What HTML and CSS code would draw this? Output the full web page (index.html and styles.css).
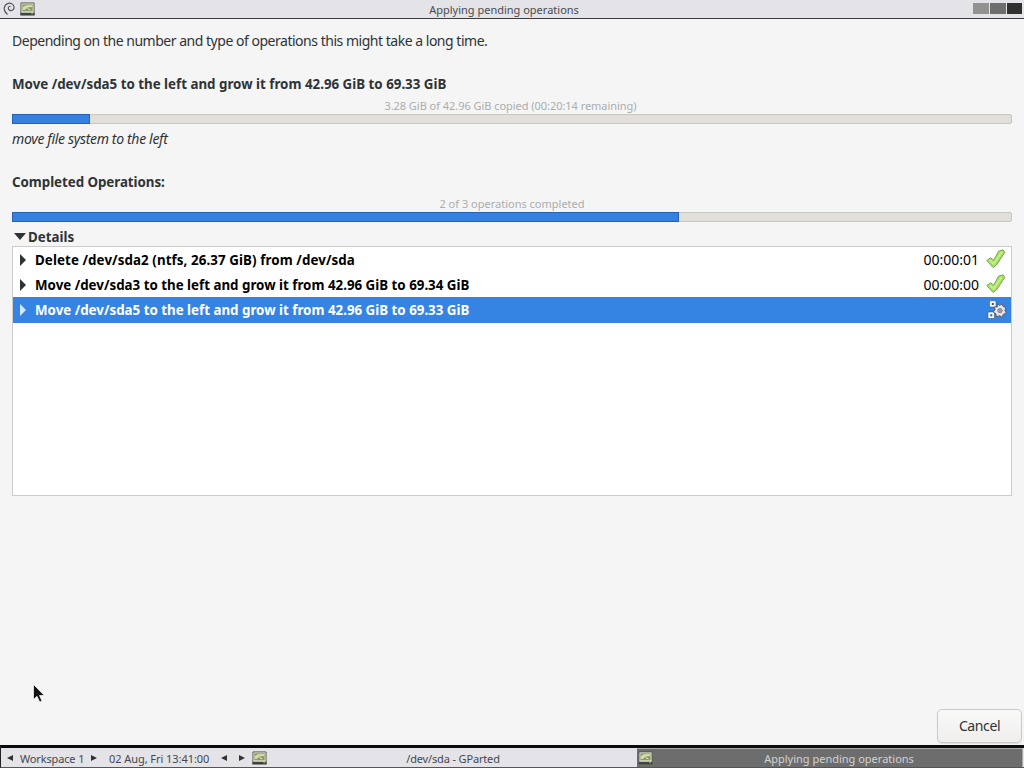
FILE: index.html
```html
<!DOCTYPE html>
<html lang="en">
<head>
<meta charset="utf-8">
<title>Applying pending operations</title>
<link rel="stylesheet" href="styles.css">
</head>
<body>
<svg class="defs" width="0" height="0">
  <symbol id="disk" viewBox="0 0 16 14">
    <path d="M1 .5H15V9L15.5 13.5H.5L1 9Z" fill="#e4e6da" stroke="#55564e"/>
    <path d="M2.5 2H13.5V9.5H2.5Z" fill="#8c9a66"/>
    <path d="M3 5Q6 2 13 3V5Q8 4 5 8H3Z" fill="#d5dcae"/>
    <path d="M8 6.5L11 8" stroke="#eef0d8"/>
    <path d="M1 11H15V13.5H1Z" fill="#3e4240"/>
    <path d="M12 12H14" stroke="#a5b56e"/>
  </symbol>
  <symbol id="check" viewBox="0 0 20 20">
    <path d="M.8 11.5L4.5 8.8L7.8 11.2L12.5 2.2L17 .8L18.8 3.3L10.5 16L7 18.5Z" fill="#a2e25c" stroke="#7ba35a" stroke-linejoin="round"/>
    <path d="M3.5 11.2L7.6 14.8L15.8 3" fill="none" stroke="#caef92" stroke-width="1.6"/>
  </symbol>
  <symbol id="gears" viewBox="0 0 20 20">
    <path d="M2.5 .8H9V7H2.5ZM1 12H7.5V18.5H1Z" fill="#fff" stroke="#31557f" stroke-width=".6"/>
    <path d="M4.8 3H6.8V5H4.8ZM3.3 14.2H5.3V16.2H3.3Z" fill="#31557f"/>
    <path d="M10.5 3.5L12.5 5.5L15 4L16 6.5L18.8 7.5L17.8 10.5L19.3 13L16.3 14.2L15 17.2L12.5 15.5L9.5 17L9 13.8L6 12L8.2 10L7.2 7L10.3 7Z" fill="#e8e6e8" stroke="#4c5362" stroke-width=".8"/>
    <circle cx="13" cy="10.6" r="2.2" fill="#a39aa3" stroke="#8b838d"/>
  </symbol>
</svg>
<header class="titlebar">
  <svg class="swirl" viewBox="0 0 12 14"><path d="M4.5 12.5C2 10.5 .8 7.5 1.5 5C2.5 1.7 6 .5 8.7 1.7C11.5 3 11.6 6.5 9.8 8C8 9.3 5.2 8.3 5.3 6C5.4 4.8 6.4 4.1 7.5 4.3" fill="none" stroke="#56565c" stroke-width="1.2"/></svg>
  <svg class="disk"><use href="#disk"/></svg>
  <span class="caption">Applying pending operations</span>
  <div class="controls"><i></i><i></i><i></i></div>
</header>
<main class="dialog">
  <p class="intro">Depending on the number and type of operations this might take a long time.</p>
  <h2>Move /dev/sda5 to the left and grow it from 42.96 GiB to 69.33 GiB</h2>
  <p class="status copied">3.28 GiB of 42.96 GiB copied (00:20:14 remaining)</p>
  <div class="bar"><div class="fill current"></div></div>
  <p class="step">move file system to the left</p>
  <h2 class="completed">Completed Operations:</h2>
  <p class="status">2 of 3 operations completed</p>
  <div class="bar"><div class="fill total"></div></div>
  <div class="details"><svg viewBox="0 0 12 7"><path d="M0 0H12L6 7Z"/></svg><b>Details</b></div>
  <div class="list">
    <div class="row"><svg class="tri" viewBox="0 0 6 12"><path d="M0 0L6 6L0 12Z"/></svg><b class="wide">Delete /dev/sda2 (ntfs, 26.37 GiB) from /dev/sda</b><time>00:00:01</time><svg class="mark"><use href="#check"/></svg></div>
    <div class="row"><svg class="tri" viewBox="0 0 6 12"><path d="M0 0L6 6L0 12Z"/></svg><b>Move /dev/sda3 to the left and grow it from 42.96 GiB to 69.34 GiB</b><time>00:00:00</time><svg class="mark"><use href="#check"/></svg></div>
    <div class="row selected"><svg class="tri" viewBox="0 0 6 12"><path d="M0 0L6 6L0 12Z"/></svg><b>Move /dev/sda5 to the left and grow it from 42.96 GiB to 69.33 GiB</b><svg class="mark"><use href="#gears"/></svg></div>
  </div>
  <button class="cancel">Cancel</button>
</main>
<footer class="taskbar">
  <div class="workspace"><svg class="arrow" viewBox="0 0 6 6"><path d="M6 0L0 3L6 6Z"/></svg><span>Workspace 1</span><svg class="arrow" viewBox="0 0 6 6"><path d="M0 0L6 3L0 6Z"/></svg></div>
  <div class="clock">02 Aug, Fri 13:41:00</div>
  <div class="switch"><svg class="arrow" viewBox="0 0 6 6"><path d="M6 0L0 3L6 6Z"/></svg><svg class="arrow" viewBox="0 0 6 6"><path d="M0 0L6 3L0 6Z"/></svg></div>
  <div class="task"><svg class="disk"><use href="#disk"/></svg><span class="name">/dev/sda - GParted</span></div>
  <div class="task active"><svg class="disk"><use href="#disk"/></svg><span>Applying pending operations</span></div>
</footer>
<svg class="pointer" viewBox="0 0 12 19"><path d="M.5 .5V15.5L4 12.3L6.7 18L9 17L6.5 11.5H11.3Z" fill="#111" stroke="#fff" stroke-width=".7"/></svg>
</body>
</html>
```
FILE: styles.css
```css
* { box-sizing: border-box; }
body {
  margin: 0;
  width: 1024px;
  height: 768px;
  overflow: hidden;
  display: flex;
  flex-direction: column;
  background: #f5f5f5;
  color: #2e3436;
  font: 13.33px/18px "Noto Sans", sans-serif;
  white-space: nowrap;
}
.defs { position: absolute; }
p, h2 { margin: 0; font-size: inherit; }
.titlebar {
  height: 19px;
  flex: none;
  display: flex;
  align-items: center;
  padding: 0 2px 0 3px;
  background: #e3e3e8;
  border-bottom: 1px solid #3c3c3e;
  font-size: 11px;
  color: #4c4c50;
}
.swirl { width: 12px; height: 14px; margin-right: 5px; }
.disk { width: 15px; height: 14px; flex: none; }
.caption { flex: 1; text-align: center; padding: 2px 0 0; }
.controls { display: flex; gap: 1px; margin-top: -2px; }
.controls i { width: 16px; height: 11px; background: #929292; }
.controls i:nth-child(2) { background: #6e6e6e; }
.controls i:nth-child(3) { background: #303030; width: 15px; }
.dialog {
  height: 726px;
  flex: none;
  display: flex;
  flex-direction: column;
  padding: 13px 12px 0;
}
.intro { margin-bottom: 25px; font-size: 14px; letter-spacing: -.48px; }
.status {
  height: 16px;
  margin-top: 5px;
  line-height: 16px;
  font-size: 11px;
  color: #aaadad;
  text-align: center;
}
.copied { letter-spacing: -.04px; padding-right: 3px; }
.bar {
  height: 10px;
  border: 1px solid #cac6c0;
  border-radius: 2px;
  background: #e2dfda;
}
.fill {
  height: 10px;
  margin: -1px 0 0 -1px;
  background: #3580e0;
  border: 1px solid #2362b5;
}
.current { width: 78px; }
.total { width: 667px; }
.step { margin-top: 6px; font-style: italic; font-size: 14px; letter-spacing: -.33px; }
.completed { margin-top: 25px; letter-spacing: -.04px; }
.details { display: flex; align-items: center; height: 24px; padding: 6px 0 0 2px; }
.details svg { width: 12px; height: 7px; margin: -2px 2px 0 0; }
.details svg, .tri { fill: #2e3436; }
.list { height: 250px; background: #fff; border: 1px solid #cdcbc9; color: #000; }
.row { height: 25px; display: flex; align-items: center; padding: 0 5px 0 7px; }
.row b { flex: 1; margin-left: 9px; }
.row .wide { letter-spacing: .09px; }
.row time { font-size: 14px; }
.tri { width: 6px; height: 12px; }
.mark { width: 20px; height: 20px; margin: -2px 0 0 7px; }
.selected { height: 26px; background: #3584e4; color: #fff; }
.selected .mark { margin: 0 -1px 0 8px; }
.selected .tri { fill: #d3e7ff; }
.cancel {
  align-self: flex-end;
  margin: 213px -10px 0 0;
  width: 85px;
  height: 34px;
  border: 1px solid #cdc9c5;
  border-radius: 5px;
  background: linear-gradient(#f9f9f9, #efeeed);
  box-shadow: 0 1px 1px #ddd;
  font: inherit;
  font-size: 14px;
  letter-spacing: -.4px;
  padding-bottom: 2px;
  color: #2e3436;
}
.taskbar {
  height: 23px;
  flex: none;
  display: flex;
  border-top: 3px solid #0b0c0a;
  border-bottom: 1px solid #555;
  background: #e3e3e8;
  font-size: 11px;
  line-height: 20px;
  color: #47474b;
  border-left: 1px solid #222;
}
.arrow { width: 6px; height: 6px; fill: #333; }
.workspace { display: flex; align-items: center; padding-left: 6px; width: 102px; gap: 7px; letter-spacing: -.15px; }
.clock { width: 112px; padding: 1px 0 0 6px; letter-spacing: -.06px; }
.workspace span, .task span { padding-top: 2px; }
.switch { width: 36px; display: flex; align-items: center; gap: 12px; padding-left: 6px; }
.task { width: 386px; display: flex; align-items: center; padding-left: 1px; }
.task span { flex: 1; text-align: center; }
.task .name { letter-spacing: -.15px; padding-left: 2px; }
.task.active { background: #6d6d6d; color: #d2d2d2; border: 1px solid #aaa; border-width: 1px 1px 0 0; }
.task.active span { padding: 1px 0 0 3px; }
.pointer { position: absolute; left: 33px; top: 684px; width: 12px; height: 19px; }
```
